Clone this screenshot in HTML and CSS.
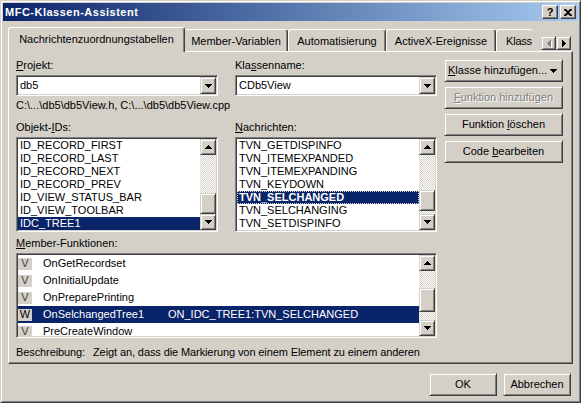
FILE: index.html
```html
<!DOCTYPE html>
<html>
<head>
<meta charset="utf-8">
<title>MFC-Klassen-Assistent</title>
<link rel="stylesheet" href="styles.css">
</head>
<body>
<div class="window">
  <div class="titlebar">
    <span class="title">MFC-Klassen-Assistent</span>
    <span class="tbtn help">?</span>
    <span class="tbtn close"><svg width="8" height="7" viewBox="0 0 8 7"><path d="M0 0h2l2 2 2-2h2v1L5 3.5 8 6v1H6L4 5 2 7H0V6l3-2.5L0 1z" fill="#000"/></svg></span>
  </div>
  <div class="client">
    <div class="tabs">
      <div class="tab active">Nachrichtenzuordnungstabellen</div>
      <div class="tab t2">Member-Variablen</div>
      <div class="tab t3">Automatisierung</div>
      <div class="tab t4">ActiveX-Ereignisse</div>
      <div class="tab t5">Klass</div>
      <div class="tabscroll">
        <span class="raised arrbtn dis"><svg width="4" height="7" viewBox="0 0 4 7"><path d="M3 0h1v7H3V6H2V5H1V4H0V3h1V2h1V1h1z" fill="#808080"/></svg></span>
        <span class="raised arrbtn"><svg width="4" height="7" viewBox="0 0 4 7"><path d="M0 0h1v1h1v1h1v1h1v1H3v1H2v1H1v1H0z" fill="#000"/></svg></span>
      </div>
    </div>
    <div class="panel">
      <div class="main">
        <div class="row">
          <div class="col">
            <div class="lbl"><u>P</u>rojekt:</div>
            <div class="combo sunken"><span class="ctext">db5</span><span class="raised dd"><svg width="7" height="4" viewBox="0 0 7 4"><path d="M0 0h7v1H6v1H5v1H4v1H3V3H2V2H1V1H0z"/></svg></span></div>
          </div>
          <div class="col">
            <div class="lbl">Kla<u>s</u>senname:</div>
            <div class="combo sunken"><span class="ctext">CDb5View</span><span class="raised dd"><svg width="7" height="4" viewBox="0 0 7 4"><path d="M0 0h7v1H6v1H5v1H4v1H3V3H2V2H1V1H0z"/></svg></span></div>
          </div>
        </div>
        <div class="path">C:\...\db5\db5View.h, C:\...\db5\db5View.cpp</div>
        <div class="row row2">
          <div class="col">
            <div class="lbl">Objekt-<u>I</u>Ds:</div>
            <div class="list sunken">
              <div class="items">
                <div class="it">ID_RECORD_FIRST</div>
                <div class="it">ID_RECORD_LAST</div>
                <div class="it">ID_RECORD_NEXT</div>
                <div class="it">ID_RECORD_PREV</div>
                <div class="it">ID_VIEW_STATUS_BAR</div>
                <div class="it">ID_VIEW_TOOLBAR</div>
                <div class="it sel">IDC_TREE1</div>
              </div>
              <div class="sb">
                <span class="raised sbtn"><svg width="7" height="4" viewBox="0 0 7 4"><path d="M3 0h1v1h1v1h1v1h1v1H0V3h1V2h1V1h1z"/></svg></span>
                <span class="track end"><span class="raised thumb t-obj"></span></span>
                <span class="raised sbtn"><svg width="7" height="4" viewBox="0 0 7 4"><path d="M0 0h7v1H6v1H5v1H4v1H3V3H2V2H1V1H0z"/></svg></span>
              </div>
            </div>
          </div>
          <div class="col">
            <div class="lbl"><u>N</u>achrichten:</div>
            <div class="list sunken">
              <div class="items">
                <div class="it">TVN_GETDISPINFO</div>
                <div class="it">TVN_ITEMEXPANDED</div>
                <div class="it">TVN_ITEMEXPANDING</div>
                <div class="it">TVN_KEYDOWN</div>
                <div class="it sel bold focus">TVN_SELCHANGED</div>
                <div class="it">TVN_SELCHANGING</div>
                <div class="it">TVN_SETDISPINFO</div>
              </div>
              <div class="sb">
                <span class="raised sbtn"><svg width="7" height="4" viewBox="0 0 7 4"><path d="M3 0h1v1h1v1h1v1h1v1H0V3h1V2h1V1h1z"/></svg></span>
                <span class="track"><span class="raised thumb t-msg"></span></span>
                <span class="raised sbtn"><svg width="7" height="4" viewBox="0 0 7 4"><path d="M0 0h7v1H6v1H5v1H4v1H3V3H2V2H1V1H0z"/></svg></span>
              </div>
            </div>
          </div>
        </div>
        <div class="lbl lbl-mem"><u>M</u>ember-Funktionen:</div>
        <div class="list mlist sunken">
          <div class="items">
            <div class="mrow"><span class="ico">V</span><span class="fname">OnGetRecordset</span></div>
            <div class="mrow"><span class="ico">V</span><span class="fname">OnInitialUpdate</span></div>
            <div class="mrow"><span class="ico">V</span><span class="fname">OnPreparePrinting</span></div>
            <div class="mrow sel"><span class="ico">W</span><span class="fname">OnSelchangedTree1</span><span class="fmap">ON_IDC_TREE1:TVN_SELCHANGED</span></div>
            <div class="mrow"><span class="ico">V</span><span class="fname">PreCreateWindow</span></div>
          </div>
          <div class="sb">
            <span class="raised sbtn"><svg width="7" height="4" viewBox="0 0 7 4"><path d="M3 0h1v1h1v1h1v1h1v1H0V3h1V2h1V1h1z"/></svg></span>
            <span class="track"><span class="raised thumb t-mem"></span></span>
            <span class="raised sbtn"><svg width="7" height="4" viewBox="0 0 7 4"><path d="M0 0h7v1H6v1H5v1H4v1H3V3H2V2H1V1H0z"/></svg></span>
          </div>
        </div>
        <div class="desc"><span class="dlabel">Beschreibung:</span>Zeigt an, dass die Markierung von einem Element zu einem anderen</div>
      </div>
      <div class="side">
        <div class="raised btn btn-left"><span><u>K</u>lasse hinzufügen...</span><svg width="7" height="4" viewBox="0 0 7 4"><path d="M0 0h7v1H6v1H5v1H4v1H3V3H2V2H1V1H0z"/></svg></div>
        <div class="raised btn disabled"><span><u>F</u>unktion hinzufügen</span></div>
        <div class="raised btn"><span>Funktion <u>l</u>öschen</span></div>
        <div class="raised btn"><span>Code <u>b</u>earbeiten</span></div>
      </div>
    </div>
    <div class="footer">
      <div class="raised btn fbtn">OK</div>
      <div class="raised btn fbtn">Abbrechen</div>
    </div>
  </div>
</div>
</body>
</html>
```

FILE: styles.css
```css
* { box-sizing: border-box; }
html, body { margin: 0; padding: 0; background: #d4d0c8; }
body {
  font: 11px/13px "Liberation Sans", Arial, sans-serif;
  color: #000;
}
u { text-decoration: underline; text-underline-offset: 1px; }
svg { display: block; }

.window {
  width: 581px;
  height: 403px;
  background: #d4d0c8;
  border: 1px solid;
  border-color: #d4d0c8 #404040 #404040 #d4d0c8;
  box-shadow: inset 1px 1px #fff, inset -1px -1px #808080;
  padding: 2px;
  display: flex;
  flex-direction: column;
}

.titlebar {
  height: 18px;
  background: linear-gradient(to right, #0a246a, #a6caf0);
  display: flex;
  align-items: center;
  padding: 0 2px 0 2px;
}
.title {
  flex: 1;
  color: #fff;
  font-weight: bold;
  letter-spacing: 0.5px;
}
.tbtn {
  width: 16px;
  height: 14px;
  background: #d4d0c8;
  border: 1px solid;
  border-color: #fff #404040 #404040 #fff;
  box-shadow: inset -1px -1px #808080;
  display: flex;
  align-items: center;
  justify-content: center;
  font-weight: bold;
  font-size: 11px;
}
.help { margin-right: 2px; }

.raised {
  background: #d4d0c8;
  border: 1px solid;
  border-color: #d4d0c8 #404040 #404040 #d4d0c8;
  box-shadow: inset 1px 1px #fff, inset -1px -1px #808080;
}
.sunken {
  background: #fff;
  border: 1px solid;
  border-color: #808080 #fff #fff #808080;
  box-shadow: inset 1px 1px #404040, inset -1px -1px #d4d0c8;
}

.client {
  flex: 1;
  display: flex;
  flex-direction: column;
  padding: 6px 0 0 5px;
}

.tabs {
  display: flex;
  align-items: flex-end;
  height: 24px;
  width: 565px;
  position: relative;
  z-index: 1;
}
.tab {
  height: 22px;
  border-top: 1px solid #fff;
  border-left: 1px solid #fff;
  border-right: 1px solid #404040;
  box-shadow: inset -1px 0 #808080;
  border-radius: 3px 3px 0 0;
  display: flex;
  align-items: center;
  justify-content: center;
  white-space: nowrap;
  overflow: hidden;
  padding-top: 1px;
}
.tab.active {
  width: 177px;
  height: 25px;
  margin-bottom: -1px;
  background: #d4d0c8;
  padding-bottom: 3px;
}
.t2 { width: 103px; border-left: none; }
.t3 { width: 98px; }
.t4 { width: 110px; }
.t5 {
  width: 37px;
  border-right: none;
  box-shadow: none;
  justify-content: flex-start;
  padding-left: 9px;
  letter-spacing: -0.2px;
}
.tabscroll {
  display: flex;
  margin-left: 8px;
  margin-bottom: 1px;
}
.arrbtn {
  width: 15px;
  height: 14px;
  display: flex;
  align-items: center;
  justify-content: center;
}
.arrbtn.dis svg { filter: drop-shadow(1px 1px 0 #fff); }

.panel {
  width: 565px;
  height: 313px;
  border-top: 1px solid #fff;
  border-left: 1px solid #fff;
  border-right: 1px solid #404040;
  border-bottom: 1px solid #404040;
  box-shadow: inset -1px -1px #808080;
  display: flex;
  gap: 7px;
  padding: 7px 0 0 7px;
}
.main { width: 421px; display: flex; flex-direction: column; }
.row { display: flex; gap: 17px; }
.col { width: 202px; display: flex; flex-direction: column; }
.lbl { height: 13px; white-space: nowrap; }

.combo {
  margin-top: 3px;
  height: 21px;
  padding: 1px;
  display: flex;
  align-items: center;
}
.ctext { flex: 1; padding-left: 2px; }
.dd {
  width: 16px;
  height: 17px;
  display: flex;
  align-items: center;
  justify-content: center;
}

.path { margin-top: 3px; height: 13px; white-space: nowrap; }
.row2 { margin-top: 9px; }

.list {
  margin-top: 3px;
  height: 95px;
  padding: 1px;
  display: flex;
  overflow: hidden;
}
.items { flex: 1; overflow: hidden; }
.it {
  height: 13px;
  padding-left: 2px;
  white-space: nowrap;
}
.sel { background: #0a246a; color: #fff; }
.bold { font-weight: bold; }
.focus { outline: 1px dotted #d4d0c8; outline-offset: -1px; }

.sb { width: 16px; display: flex; flex-direction: column; }
.sbtn {
  width: 16px;
  height: 16px;
  flex: none;
  display: flex;
  align-items: center;
  justify-content: center;
}
.track {
  flex: 1;
  display: flex;
  flex-direction: column;
  background-color: #fff;
  background-image: conic-gradient(#fff 25%, #d4d0c8 0 50%, #fff 0 75%, #d4d0c8 0);
  background-size: 2px 2px;
}
.track.end { justify-content: flex-end; }
.thumb { width: 16px; flex: none; }
.t-obj { height: 21px; }
.t-msg { height: 21px; margin-top: 35px; }
.t-mem { height: 24px; margin-top: 17px; }

.lbl-mem { margin-top: 5px; }
.mlist { height: 85px; width: 421px; }
.mrow {
  height: 17px;
  display: flex;
  align-items: center;
  white-space: nowrap;
}
.ico {
  width: 14px;
  height: 12px;
  background: #d4d0c8;
  color: #404040;
  display: flex;
  align-items: center;
  justify-content: center;
  margin-right: 11px;
  flex: none;
}
.mrow.sel .ico { color: #000; }
.fname { width: 125px; flex: none; }

.desc { margin-top: 8px; height: 13px; white-space: nowrap; letter-spacing: -0.1px; }
.dlabel { display: inline-block; width: 77px; }

.side { width: 119px; display: flex; flex-direction: column; gap: 4px; }
.btn {
  height: 23px;
  display: flex;
  align-items: center;
  justify-content: center;
  white-space: nowrap;
}
.btn-left { justify-content: space-between; padding: 0 5px 0 3px; }
.disabled { color: #808080; text-shadow: 1px 1px 0 #fff; }

.footer {
  width: 565px;
  display: flex;
  justify-content: flex-end;
  gap: 6px;
  padding-right: 2px;
  margin-top: 9px;
}
.fbtn { width: 68px; }
```
